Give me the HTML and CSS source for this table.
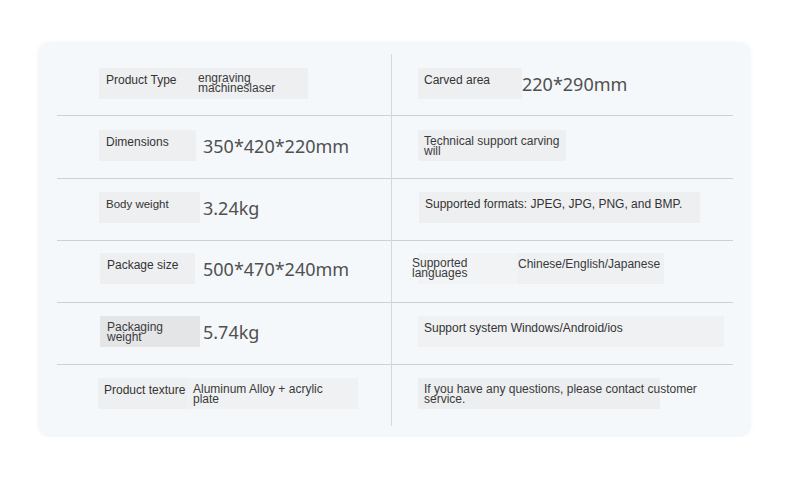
FILE: index.html
```
<!DOCTYPE html>
<html>
<head>
<meta charset="utf-8">
<link rel="stylesheet" href="styles.css">
</head>
<body>
<div class="card">
  <div class="col col-left">
    <div class="cell">
      <div class="pair">
        <div class="label w96">Product Type</div>
        <div class="vbox vb1"><span class="multi t100">engraving machineslaser</span></div>
      </div>
    </div>
    <div class="cell">
      <div class="pair">
        <div class="label w97">Dimensions</div>
        <div class="big p7">350*420*220mm</div>
      </div>
    </div>
    <div class="cell">
      <div class="pair">
        <div class="label w101 sm">Body weight</div>
        <div class="big p3">3.24kg</div>
      </div>
    </div>
    <div class="cell">
      <div class="pair shift1">
        <div class="label w95">Package size</div>
        <div class="big p8">500*470*240mm</div>
      </div>
    </div>
    <div class="cell">
      <div class="pair shift1">
        <div class="label w100 dark"><span class="multi t90">Packaging weight</span></div>
        <div class="big p3">5.74kg</div>
      </div>
    </div>
    <div class="cell">
      <div class="pair shiftm1">
        <div class="label w89 pl6">Product texture</div>
        <div class="vbox vb6"><span class="multi t140">Aluminum Alloy + acrylic plate</span></div>
      </div>
    </div>
  </div>
  <div class="col col-right">
    <div class="cell">
      <div class="pair">
        <div class="label w104 pl6">Carved area</div>
        <div class="big">220*290mm</div>
      </div>
    </div>
    <div class="cell">
      <div class="pair">
        <div class="label w148 pl6 mtop"><span class="multi t140">Technical support carving will</span></div>
      </div>
    </div>
    <div class="cell">
      <div class="pair shift1">
        <div class="label w281 pl6">Supported formats: JPEG, JPG, PNG, and BMP.</div>
      </div>
    </div>
    <div class="cell">
      <div class="pair">
        <div class="lang">
          <div class="lang-label"><span class="multi t90">Supported languages</span></div>
          <div class="lang-value">Chinese/English/Japanese</div>
        </div>
      </div>
    </div>
    <div class="cell">
      <div class="pair">
        <div class="label w306 pl6 light">Support system Windows/Android/ios</div>
      </div>
    </div>
    <div class="cell">
      <div class="pair">
        <div class="label w242 pl6 mq"><span class="multi t290">If you have any questions, please contact customer service.</span></div>
      </div>
    </div>
  </div>
</div>
</body>
</html>
```
FILE: styles.css
```
body {
  margin: 0;
  background: #ffffff;
  font-family: "Liberation Sans", Arial, sans-serif;
  color: #333333;
}

.card {
  margin: 42px 0 0 38px;
  width: 713px;
  height: 395px;
  box-sizing: border-box;
  padding: 12px 18px 11px 19px;
  background: #f5f8fb;
  border-radius: 12px;
  box-shadow: 0 0 5px 1px #f7f9fb;
  display: flex;
}

.col {
  display: flex;
  flex-direction: column;
}

.col-left {
  width: 335px;
  box-sizing: border-box;
  border-right: 1px solid #d4d7db;
}

.col-right {
  width: 341px;
}

.cell {
  height: 62px;
  box-sizing: border-box;
  border-bottom: 1px solid #cdd1d6;
  padding-top: 13px;
}

.cell:nth-child(1),
.cell:nth-child(2) {
  padding-top: 14px;
}

.cell:nth-child(2) {
  height: 63px;
}

.cell:nth-child(4) {
  padding-top: 12px;
}

.cell:last-child {
  height: 61px;
  border-bottom: none;
}

.col-left .cell {
  padding-left: 42px;
}

.col-right .cell {
  padding-left: 26px;
}

.pair {
  display: flex;
  align-items: flex-start;
}

.shift1 {
  margin-left: 1px;
}

.shiftm1 {
  margin-left: -1px;
}

.label {
  height: 31px;
  box-sizing: border-box;
  padding: 5px 0 0 7px;
  background: #eeeff1;
  font-size: 12px;
  line-height: 14px;
  color: #333333;
  white-space: nowrap;
}

.label.sm {
  font-size: 11.5px;
}

.label.dark {
  background: #e4e5e7;
  padding-top: 6px;
}

.label.light {
  background: #eff1f3;
}

.label.mtop {
  padding-top: 6px;
}

.label.mq {
  padding-top: 6px;
  background: #eceef0;
}

.pl6 {
  padding-left: 6px;
}

.w89 { width: 89px; }
.w95 { width: 95px; }
.w96 { width: 96px; }
.w97 { width: 97px; }
.w100 { width: 100px; }
.w101 { width: 101px; }
.w104 { width: 104px; }
.w148 { width: 148px; }
.w242 { width: 242px; }
.w281 { width: 281px; }
.w306 { width: 306px; }

.multi {
  display: block;
  white-space: normal;
  font-size: 12px;
  line-height: 10px;
  color: #3a3a3a;
}

.t90 { width: 90px; }
.t100 { width: 100px; }
.t140 { width: 140px; }
.t290 { width: 290px; }

.vbox {
  height: 31px;
  box-sizing: border-box;
}

.vb1 {
  width: 113px;
  background: #eeeff1;
  padding: 5px 0 0 3px;
}

.vb6 {
  width: 171px;
  background: #f0f1f3;
  padding: 6px 0 0 6px;
}

.big {
  font-family: "Noto Sans", "DejaVu Sans", sans-serif;
  font-size: 18px;
  line-height: 31px;
  margin-top: 1px;
  color: #505050;
  white-space: nowrap;
}

.p3 { padding-left: 3px; }
.p7 { padding-left: 7px; }
.p8 { padding-left: 8px; }

.lang {
  display: flex;
  width: 246px;
  height: 31px;
}

.lang-label {
  width: 100px;
  box-sizing: border-box;
  background: #f1f3f5;
  padding-top: 5px;
}

.lang-label .multi {
  margin-left: -6px;
}

.lang-value {
  flex: 1;
  background: #eef0f2;
  font-size: 12px;
  line-height: 14px;
  padding-top: 4px;
  color: #3a3a3a;
  white-space: nowrap;
}
```
